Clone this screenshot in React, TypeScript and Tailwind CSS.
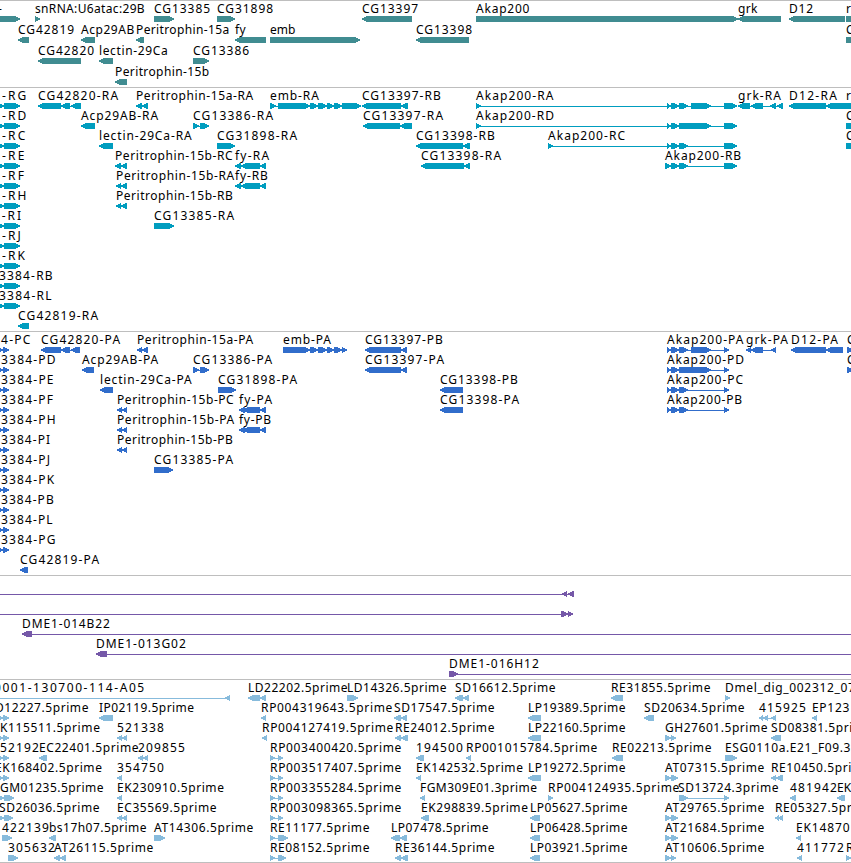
type Dir = '<' | '>';
type Seg = [number, number];
type Feature = {
  label: string;
  x: number;
  dir: Dir;
  segs: Seg[];
  line?: Seg;
};
type TrackData = { name: string; color: string; rowClass: string; padClass: string; rows: Feature[][] };

const f = (label: string, x: number, dir: Dir, segs: Seg[], line?: Seg): Feature => ({ label, x, dir, segs, line });

const EDGE: Seg[] = [[846, 870]];

const genes: Feature[][] = [
  [
    f('-', -2, '>', [[-20, 20]]),
    f('snRNA:U6atac:29B', 35, '>', [[35, 40]]),
    f('CG13385', 154, '>', [[154, 174]]),
    f('CG31898', 217, '>', [[217, 235]]),
    f('CG13397', 362, '<', [[362, 412]]),
    f('Akap200', 476, '>', [[476, 738]]),
    f('grk', 738, '<', [[738, 781]]),
    f('D12', 789, '<', [[789, 845]]),
    f('r', 846, '>', EDGE),
  ],
  [
    f('CG42819', 18, '<', [[18, 29]]),
    f('Acp29AB', 81, '<', [[81, 95]]),
    f('Peritrophin-15a', 136, '<', [[136, 144]]),
    f('fy', 235, '<', [[235, 266]]),
    f('emb', 270, '>', [[270, 360]]),
    f('CG13398', 416, '<', [[416, 469]]),
    f('C', 846, '>', EDGE),
  ],
  [
    f('CG42820', 38, '<', [[38, 81]]),
    f('lectin-29Ca', 99, '<', [[99, 113]]),
    f('CG13386', 193, '>', [[193, 209]]),
  ],
  [f('Peritrophin-15b', 115, '<', [[115, 127]])],
];

const left = (label: string, x: number) => f(label, x, '>', [[-3, 4], [4, 20]]);
const akapHead: Seg[] = [[667, 671], [671, 679]];

const transcripts: Feature[][] = [
  [
    left('--RG', -4),
    f('CG42820-RA', 38, '<', [[38, 61], [61, 70], [71, 81]]),
    f('Peritrophin-15a-RA', 136, '<', [[136, 142], [142, 148]]),
    f('emb-RA', 270, '>', [[270, 276], [278, 310], [310, 318], [318, 327], [327, 334], [334, 342], [342, 361]]),
    f('CG13397-RB', 362, '<', [[362, 401], [401, 408]]),
    f('Akap200-RA', 476, '>', [[476, 481], ...akapHead, [679, 688], [691, 711], [724, 737]]),
    f('grk-RA', 738, '<', [[738, 750], [751, 763], [770, 776], [777, 783]]),
    f('D12-RA', 789, '<', [[789, 826], [826, 846]]),
    f('r', 846, '>', EDGE),
  ],
  [
    left('--RD', -4),
    f('Acp29AB-RA', 81, '<', [[81, 95]]),
    f('CG13386-RA', 193, '>', [[193, 199], [200, 209]]),
    f('CG13397-RA', 363, '<', [[363, 400], [400, 412]]),
    f('Akap200-RD', 476, '>', [[476, 481], ...akapHead, [679, 711], [724, 737]]),
    f('C', 846, '>', EDGE),
  ],
  [
    left('--RC', -4),
    f('lectin-29Ca-RA', 99, '<', [[99, 113]]),
    f('CG31898-RA', 217, '>', [[217, 235]]),
    f('CG13398-RB', 416, '<', [[416, 463], [463, 470]]),
    f('Akap200-RC', 548, '>', [[548, 553], ...akapHead, [679, 688], [724, 737]]),
    f('C', 846, '>', EDGE),
  ],
  [
    left('--RE', -4),
    f('Peritrophin-15b-RC', 115, '<', [[115, 121], [121, 127]]),
    f('fy-RA', 235, '<', [[235, 241], [241, 260], [260, 266]]),
    f('CG13398-RA', 421, '<', [[421, 464], [464, 470]]),
    f('Akap200-RB', 665, '>', [[665, 671], [671, 679], [679, 688], [724, 737]]),
  ],
  [
    left('--RF', -4),
    f('Peritrophin-15b-RA', 116, '<', [[116, 121], [121, 127]]),
    f('fy-RB', 235, '<', [[235, 241], [241, 260], [260, 266]]),
  ],
  [left('--RH', -4), f('Peritrophin-15b-RB', 116, '<', [[116, 121], [121, 127]])],
  [left('--RI', -4), f('CG13385-RA', 154, '>', [[154, 174]])],
  [left('--RJ', -4)],
  [left('--RK', -4)],
  [left('3384-RB', -1)],
  [left('3384-RL', -1)],
  [f('CG42819-RA', 18, '<', [[18, 29]])],
];

const stub = (label: string, x = 1) => f(label, x, '>', [[-3, 3], [3, 9]]);

const proteins: Feature[][] = [
  [
    stub('4-PC'),
    f('CG42820-PA', 41, '<', [[41, 61], [61, 70], [71, 80]]),
    f('Peritrophin-15a-PA', 137, '<', [[137, 142], [142, 148]]),
    f('emb-PA', 283, '>', [[283, 310], [310, 318], [318, 327], [327, 334], [334, 342], [342, 347]]),
    f('CG13397-PB', 365, '<', [[365, 401], [401, 407]]),
    f('Akap200-PA', 667, '>', [...akapHead, [679, 688], [691, 711], [724, 729]]),
    f('grk-PA', 746, '<', [[746, 751], [751, 763], [771, 776]]),
    f('D12-PA', 791, '<', [[791, 826], [826, 843]]),
    f('C', 847, '>', [[847, 853]]),
  ],
  [
    stub('3384-PD'),
    f('Acp29AB-PA', 82, '<', [[82, 94]]),
    f('CG13386-PA', 193, '>', [[193, 199], [200, 209]]),
    f('CG13397-PA', 365, '<', [[365, 401], [401, 407]]),
    f('Akap200-PD', 667, '>', [...akapHead, [679, 711], [724, 729]]),
    f('C', 847, '>', [[847, 853]]),
  ],
  [
    stub('3384-PE'),
    f('lectin-29Ca-PA', 100, '<', [[100, 113]]),
    f('CG31898-PA', 218, '>', [[218, 236]]),
    f('CG13398-PB', 440, '<', [[440, 463]]),
    f('Akap200-PC', 667, '>', [...akapHead, [679, 688], [724, 729]]),
  ],
  [
    stub('3384-PF'),
    f('Peritrophin-15b-PC', 117, '<', [[117, 122], [122, 127]]),
    f('fy-PA', 239, '<', [[239, 245], [243, 260], [260, 266]]),
    f('CG13398-PA', 440, '<', [[440, 463]]),
    f('Akap200-PB', 667, '>', [...akapHead, [679, 688], [724, 729]]),
  ],
  [
    stub('3384-PH'),
    f('Peritrophin-15b-PA', 117, '<', [[117, 122], [122, 127]]),
    f('fy-PB', 239, '<', [[239, 245], [243, 260], [260, 266]]),
  ],
  [stub('3384-PI'), f('Peritrophin-15b-PB', 117, '<', [[117, 122], [122, 127]])],
  [stub('3384-PJ'), f('CG13385-PA', 154, '>', [[154, 173]])],
  [stub('3384-PK')],
  [stub('3384-PB')],
  [stub('3384-PL')],
  [stub('3384-PG')],
  [f('CG42819-PA', 20, '<', [[20, 28]])],
];

const clones: Feature[][] = [
  [f('', 0, '<', [[562, 567], [568, 574]], [0, 574])],
  [f('', 0, '>', [[561, 568], [568, 573]], [0, 573])],
  [f('DME1-014B22', 22, '<', [[22, 32]], [22, 851])],
  [f('DME1-013G02', 96, '<', [[96, 107]], [96, 851])],
  [f('DME1-016H12', 449, '>', [[449, 458]], [449, 851])],
];

const rp = (label: string, x2 = 283) => f(label, 270, '>', [[270, 275], [278, x2]]);

const ests: Feature[][] = [
  [
    f('0001-130700-114-A05', -6, '<', [[225, 230]], [0, 230]),
    f('LD22202.5prime', 248, '<', [[248, 260], [260, 266]]),
    f('LD14326.5prime', 347, '>', [[347, 358]]),
    f('SD16612.5prime', 455, '<', [[455, 463], [463, 469]]),
    f('RE31855.5prime', 611, '<', [[611, 623]]),
    f('Dmel_dig_002312_07', 725, '>', [[725, 730]]),
  ],
  [
    stub('D12227.5prime', -5),
    f('IP02119.5prime', 99, '<', [[99, 113]]),
    f('RP004319643.5prime', 261, '<', [[261, 266]]),
    f('SD17547.5prime', 394, '<', [[394, 401], [401, 407]]),
    f('LP19389.5prime', 528, '<', [[528, 541]]),
    f('SD20634.5prime', 644, '<', [[644, 654]]),
    f('415925', 759, '<', [[759, 763], [763, 768], [771, 776]]),
    f('EP123', 812, '<', [[812, 817]]),
  ],
  [
    stub('K115511.5prime', 0),
    f('521338', 117, '<', [[117, 122], [122, 127]]),
    f('RP004127419.5prime', 262, '<', [[262, 267]]),
    f('RE24012.5prime', 395, '<', [[395, 401], [401, 408]]),
    f('LP22160.5prime', 528, '<', [[528, 541]]),
    f('GH27601.5prime', 665, '>', [[665, 671], [671, 676]]),
    f('SD08381.5prime', 771, '<', [[771, 781]]),
  ],
  [
    stub('52192', 0),
    f('EC22401.5prime', 39, '<', [[39, 47]]),
    f('209855', 138, '<', [[138, 143], [143, 148]]),
    rp('RP003400420.5prime'),
    f('194500', 416, '<', [[416, 424]]),
    f('RP001015784.5prime', 466, '<', [[466, 471]]),
    f('RE02213.5prime', 612, '<', [[612, 623]]),
    f('ESG0110a.E21_F09.3prime', 725, '>', [[725, 737]]),
  ],
  [
    stub('EK168402.5prime', -5),
    f('354750', 117, '<', [[117, 122]]),
    rp('RP003517407.5prime'),
    f('EK142532.5prime', 416, '<', [[416, 421]]),
    f('LP19272.5prime', 528, '<', [[528, 541]]),
    f('AT07315.5prime', 665, '>', [[665, 671], [671, 678]]),
    f('RE10450.5prime', 771, '<', [[771, 776], [776, 783]]),
  ],
  [
    f('GM01235.5prime', 0, '>', [[-3, 4], [4, 14]]),
    f('EK230910.5prime', 117, '<', [[117, 122]]),
    rp('RP003355284.5prime'),
    f('FGM309E01.3prime', 420, '<', [[420, 425]]),
    f('RP004124935.5prime', 548, '>', [[548, 553]]),
    f('SD13724.3prime', 678, '>', [[679, 688], [724, 729]]),
    f('481942', 790, '<', [[790, 796]]),
    f('EK', 837, '<', [[837, 845]]),
  ],
  [
    f('SD26036.5prime', -1, '>', [[-3, 4], [4, 13]]),
    f('EC35569.5prime', 117, '<', [[117, 122], [122, 127]]),
    rp('RP003098365.5prime'),
    f('EK298839.5prime', 421, '<', [[421, 429]]),
    f('LP05627.5prime', 530, '<', [[530, 540]]),
    f('AT29765.5prime', 665, '>', [[665, 671], [671, 678]]),
    f('RE05327.5prime', 775, '<', [[775, 779], [778, 783]]),
  ],
  [
    f('422139', 2, '>', [[2, 12]]),
    f('bs17h07.5prime', 49, '<', [[49, 56]]),
    f('AT14306.5prime', 154, '>', [[154, 165]]),
    rp('RE11177.5prime', 288),
    f('LP07478.5prime', 391, '<', [[391, 400], [400, 407]]),
    f('LP06428.5prime', 530, '<', [[530, 540]]),
    f('AT21684.5prime', 665, '>', [[665, 671], [671, 678]]),
    f('EK14870', 796, '<', [[796, 801]]),
  ],
  [
    f('305632', 8, '>', [[8, 18]]),
    f('AT26115.5prime', 54, '<', [[54, 60], [60, 66]]),
    rp('RE08152.5prime', 286),
    f('RE36144.5prime', 395, '<', [[395, 401], [401, 408]]),
    f('LP03921.5prime', 530, '<', [[530, 540]]),
    f('AT10606.5prime', 665, '>', [[665, 671], [671, 676]]),
    f('411772', 797, '<', [[797, 802]]),
    f('R', 846, '>', [[846, 851]]),
  ],
];

const tracks: TrackData[] = [
  { name: 'genes', color: 'text-[#408c91]', rowClass: 'h-[21px]', padClass: 'pb-0.5', rows: genes },
  { name: 'transcripts', color: 'text-[#009dbf]', rowClass: 'h-5', padClass: 'pb-[3px]', rows: transcripts },
  { name: 'proteins', color: 'text-[#316dcb]', rowClass: 'h-5', padClass: 'pb-[3px]', rows: proteins },
  { name: 'clones', color: 'text-[#7558a8]', rowClass: 'h-5', padClass: 'pb-[3px]', rows: clones },
  { name: 'ests', color: 'text-[#87bbdc]', rowClass: 'h-5', padClass: 'pb-0.5', rows: ests },
];

/** Pixel advance of each character on the label grid; digits and anything unlisted take 8. */
const ADVANCE: Record<string, number> = {
  A: 8.5, B: 7, D: 9, E: 7, F: 6.5, G: 9, H: 9, I: 3.5, J: 3.5, K: 7.5, L: 6, M: 10, N: 9, P: 7, R: 8, S: 7, T: 6.5,
  a: 7, c: 6, e: 7, f: 4, h: 7, i: 3, k: 7, l: 3, m: 10.5, n: 7, o: 7, p: 7.75, r: 4.75, s: 6, t: 4.5, y: 7,
  '-': 7.75, '.': 4, ':': 4, _: 6,
};

const pen = document.createElement('canvas').getContext('2d');

/** Letter spacing that stretches a label to its width on the grid. */
function tracking(label: string): number {
  if (!pen || label.length < 2) return 0;
  pen.font = '12px "Noto Sans"';
  const target = [...label].reduce((sum, c) => sum + (ADVANCE[c] ?? 8), 0);
  return (target - pen.measureText(label).width) / label.length;
}

/** Outline of one exon: a 6px bar whose end tapers in the strand's direction. */
function exon([a, b]: Seg, dir: Dir): string {
  const tip = Math.min(5, b - a);
  return dir === '>'
    ? `M${a} 0H${b - tip}L${b} 2.5V3.5L${b - tip} 6H${a}Z`
    : `M${b} 0H${a + tip}L${a} 2.5V3.5L${a + tip} 6H${b}Z`;
}

function Row({ features, rowClass }: { features: Feature[]; rowClass: string }) {
  return (
    <div className={`relative flex flex-col ${rowClass}`}>
      <div className="h-[15px] shrink-0">
        {features.map((ft, i) => (
          <span
            key={i}
            className="absolute top-0 whitespace-pre text-[12px] leading-4 text-black"
            style={{ left: ft.x, letterSpacing: `${tracking(ft.label)}px` }}
          >
            {ft.label}
          </span>
        ))}
      </div>
      <svg className="block h-1.5 w-[851px] shrink-0" viewBox="0 0 851 6" fill="currentColor" shapeRendering="crispEdges">
        {features.map((ft, i) => {
          const [x1, x2] = ft.line ?? [ft.segs[0][0], ft.segs[ft.segs.length - 1][1]];
          return (
            <g key={i}>
              <rect x={x1} y={3} width={x2 - x1} height={1} />
              <path d={ft.segs.map((s) => exon(s, ft.dir)).join('')} />
            </g>
          );
        })}
      </svg>
    </div>
  );
}

export default function App() {
  return (
    <main className="flex h-[863px] w-[851px] flex-col overflow-hidden border-b border-[#bebebe] bg-white font-['Noto_Sans',sans-serif]">
      {tracks.map((t) => (
        <section key={t.name} className={`border-t border-[#bebebe] ${t.color} ${t.padClass}`}>
          {t.rows.map((row, i) => (
            <Row key={i} features={row} rowClass={t.rowClass} />
          ))}
        </section>
      ))}
    </main>
  );
}
